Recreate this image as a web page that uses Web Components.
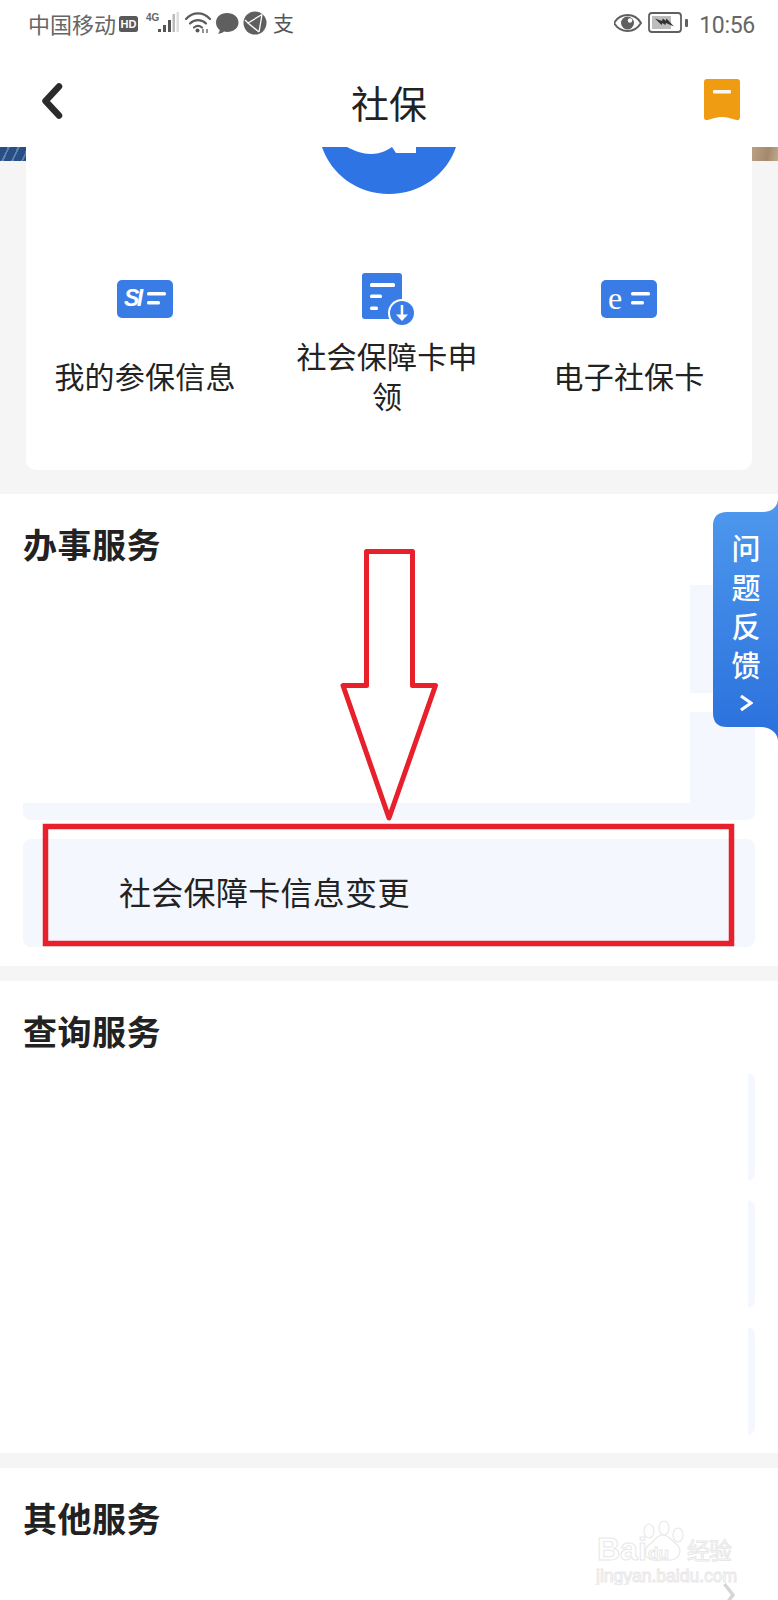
<!DOCTYPE html>
<html lang="zh-CN"><head><meta charset="utf-8"><title>社保</title>
<style>
html,body{margin:0;padding:0;background:#f5f5f5}
body{font-family:"Noto Sans CJK SC","Noto Sans",sans-serif;color:#222}
</style></head>
<body>
<social-page>
  <app-status></app-status>
  <app-nav>社保</app-nav>
  <hero-card>
    <service-tile icon="si">我的参保信息</service-tile>
    <service-tile icon="doc">社会保障卡申领</service-tile>
    <service-tile icon="e">电子社保卡</service-tile>
  </hero-card>
  <service-section heading="办事服务">
    <service-row style="--mw:667px;--mh:100%"></service-row>
    <service-row style="--mw:667px;--mh:91px"></service-row>
    <service-row style="--mw:0px;--mh:0px">社会保障卡信息变更</service-row>
  </service-section>
  <service-section heading="查询服务" class="q">
    <service-row style="--mw:725px;--mh:100%"></service-row>
    <service-row style="--mw:725px;--mh:100%"></service-row>
    <service-row style="--mw:725px;--mh:100%"></service-row>
  </service-section>
  <service-section heading="其他服务" class="last">
    <service-row chevron style="--mw:100%;--mh:100%"></service-row>
  </service-section>
  <feedback-tab></feedback-tab>
  <red-annotation></red-annotation>
  <baidu-mark></baidu-mark>
</social-page>
<script>
const tpl=(html)=>{const t=document.createElement('template');t.innerHTML=html;return t;};
class Base extends HTMLElement{
  connectedCallback(){ if(this.shadowRoot) return; const r=this.attachShadow({mode:'open'}); r.appendChild(this.constructor.t(this).content.cloneNode(true)); }
}
class SocialPage extends Base{ static t(){return tpl(`<style>:host{display:block;position:relative;width:778px;height:1600px;overflow:hidden;background:#f5f5f5}</style><slot></slot>`);} }
class AppStatus extends Base{ static t(){return tpl(`<style>
:host{display:flex;align-items:center;height:50px;background:#fff;color:#666;padding:0 23px 0 28px;box-sizing:border-box;font-size:22px}
.c{line-height:44px;padding-bottom:4px;width:91px;white-space:nowrap}
svg{display:block;flex:none}
.sp{flex:1}
.t{font:400 23px Roboto,sans-serif;letter-spacing:-.3px;margin-left:10px;color:#666}
</style>
<span class="c">中国移动</span>
<svg width="176" height="50" viewBox="119 0 176 50">
 <rect x="119" y="16" width="19" height="16" rx="2.5" fill="#595959"/>
 <text x="128.5" y="28" font-family="Liberation Sans" font-weight="700" font-size="11" fill="#fff" text-anchor="middle">HD</text>
 <text x="146" y="21" font-family="Liberation Sans" font-weight="700" font-size="10" fill="#666">4G</text>
 <g fill="#555"><rect x="158" y="29" width="3" height="3"/><rect x="163" y="25" width="3" height="7"/><rect x="168" y="20" width="3" height="12"/></g>
 <rect x="172.500" y="14" width="2.500" height="18" fill="#bbb"/><rect x="176.500" y="12" width="2.500" height="20" fill="#ddd"/>
 <g fill="none" stroke="#5c5c5c" stroke-width="2.200" stroke-linecap="round"><path d="M186 19c7-7.500 17-7.500 24 0"/><path d="M190 23.500c4.500-4.500 11.500-4.500 16 0"/><path d="M194 27.500c2.500-2 5.500-2 8 0"/></g>
 <circle cx="197.500" cy="30.500" r="2" fill="#555"/><path d="M203 29v4M207 29v4" stroke="#666" stroke-width="1.400"/>
 <path d="M227 13c6.500 0 11.500 4 11.500 9.500S233.500 32 227 32c-1 0-2-.1-3-.4-1.500 1.300-3.500 2.200-6 2.400 1-1.200 1.600-2.500 1.700-4-2.300-1.700-3.700-4.300-3.700-7.500C216 17 220.500 13 227 13z" fill="#5f5f5f"/>
 <circle cx="255" cy="23" r="11.500" fill="#5f5f5f"/><path d="M262 14.500 248 23l11 9M262 14.500 259 32M248 23l-3-3" fill="none" stroke="#fff" stroke-width="1.300"/>
 <text x="273" y="31" font-size="21" fill="#555" font-family="Noto Sans CJK SC">支</text>
</svg>
<span class="sp"></span>
<svg width="75" height="50" viewBox="615 0 75 50">
 <path d="M615 23c3-5 8-8 13.500-8s10.500 3 13.500 8c-3 5-8 8-13.500 8S618 28 615 23z" fill="none" stroke="#606060" stroke-width="2"/>
 <circle cx="628.500" cy="23" r="6.500" fill="#606060"/><circle cx="631" cy="20.500" r="2.200" fill="#fff"/>
 <rect x="650" y="13" width="32" height="19" rx="3" fill="none" stroke="#606060" stroke-width="1.800"/>
 <rect x="653" y="16" width="19" height="13" fill="#bdbdbd"/>
 <path d="M656 18.500l7 2.500.8-2.500 3 2.300.7-2.300 7.500 8-8-3.500-.7 2-3-2-.8 2z" fill="#333"/>
 <rect x="686" y="19" width="3" height="8" rx="1" fill="#606060"/>
</svg>
<span class="t">10:56</span>`);} }
class AppNav extends Base{ static t(){return tpl(`<style>
:host{display:grid;grid-template-columns:1fr auto 1fr;align-items:center;height:97px;background:#fff;padding:0 38px 0 41px;box-sizing:border-box;font-size:38px;color:#222}
svg{display:block}
.tt{line-height:52px;margin:6px 0 0 -3px}
.end{justify-self:end}
</style>
<svg width="22" height="36" viewBox="0 0 22 36" style="margin-top:5px"><path d="M18 3.500 4.500 18 18 32.500" fill="none" stroke="#2b2b2b" stroke-width="6.500" stroke-linecap="round" stroke-linejoin="round"/></svg>
<span class="tt"><slot></slot></span>
<svg class="end" width="36" height="42" viewBox="0 0 36 42" style="margin-top:3px"><path d="M3 0h30a3 3 0 0 1 3 3v35c0 2.500-1.500 3.600-3.500 3-5-1.500-9.500-3-14.500-3S8.500 39.500 3.500 41C1.500 41.600 0 40.500 0 38V3a3 3 0 0 1 3-3z" fill="#f09c12"/><rect x="9" y="11" width="18" height="3.500" rx="1" fill="#fff" opacity=".92"/></svg>`);} }
class HeroCard extends Base{ static t(){return tpl(`<style>
:host{display:grid;grid-template-columns:26px 726px 26px;height:332px;background:#f5f5f5;overflow:hidden}
.l{height:14px;background:repeating-linear-gradient(115deg,#274f86 0 7px,#5b7fae 7px 9px)}
.r{height:14px;background:linear-gradient(100deg,#b9a184,#a48a6c 60%,#c0a98e)}
.card{background:#fff;border-radius:0 0 10px 10px;height:323px;display:flex;flex-direction:column}
.blob{display:block;margin:0 auto;flex:none}
.tiles{display:grid;grid-template-columns:repeat(3,242px);margin-top:77px;margin-left:-2px}
</style>
<div class="l"></div>
<div class="card">
 <svg class="blob" width="136" height="48" viewBox="321 147 136 48"><path d="M322 147c9 27 35 47 67 47s58-20 67-47H416v6h-20l-4-6c-6 4-12 7-21 7-9 0-16-3-24-7z" fill="#2f74e4"/></svg>
 <div class="tiles"><slot></slot></div>
</div>
<div class="r"></div>`);} }
const icons={
si:`<svg width="56" height="38" viewBox="0 0 56 38"><rect width="56" height="38" rx="5" fill="#3a7ce6"/><text x="7" y="26" font-family="Liberation Sans" font-weight="700" font-style="italic" font-size="23" letter-spacing="-2.500" fill="#fff">SI</text><rect x="30" y="12" width="19" height="3.500" rx="1.500" fill="#fff"/><rect x="30" y="21" width="13" height="3.500" rx="1.500" fill="#fff"/></svg>`,
e:`<svg width="56" height="38" viewBox="0 0 56 38"><rect width="56" height="38" rx="5" fill="#3a7ce6"/><text x="7" y="28.500" font-family="Liberation Serif" font-size="32" fill="#fff">e</text><rect x="30" y="12" width="19" height="3.500" rx="1.500" fill="#fff"/><rect x="30" y="21" width="13" height="3.500" rx="1.500" fill="#fff"/></svg>`,
doc:`<svg width="54" height="54" viewBox="0 0 54 54"><rect x="0" y="0" width="40" height="46" rx="3" fill="#3a7ce6"/><rect x="8" y="10" width="25" height="4" rx="1.500" fill="#fff"/><rect x="8" y="21.500" width="12" height="3.500" rx="1.500" fill="#fff"/><rect x="8" y="33.500" width="8" height="3.500" rx="1.500" fill="#fff"/><circle cx="40" cy="40" r="14" fill="#fff"/><circle cx="40" cy="40" r="12" fill="#3a7ce6"/><path d="M40 32v13" stroke="#fff" stroke-width="2.500"/><path d="M34 41.500h12L40 48z" fill="#fff"/></svg>`};
class ServiceTile extends Base{ static t(el){return tpl(`<style>
:host{display:flex;flex-direction:column;align-items:center;width:242px}
.i{height:54px;display:flex;align-items:center;justify-content:center}
.i svg{display:block}
.doc{margin-left:4px;margin-top:2px;height:52px}
.lb{margin-top:7px;height:84px;display:flex;align-items:center;justify-content:center;box-sizing:border-box;padding:0 30px;text-align:center;font-size:30px;letter-spacing:.2px;line-height:40px;color:#222}
</style>
<div class="i ${el.getAttribute('icon')}">${icons[el.getAttribute('icon')]}</div>
<div class="lb"><span><slot></slot></span></div>`);} }
class ServiceSection extends Base{ static t(el){return tpl(`<style>
:host{display:block;background:#fff;padding:30px 23px 19px;margin-top:15px;box-sizing:border-box}
:host(.q){padding-bottom:18px}
:host(.last){height:132px;overflow:hidden}
h2{margin:0 0 21px;font:700 34px/40px "Noto Sans CJK SC",sans-serif;color:#222;letter-spacing:.5px}
:host(.q) h2{margin-bottom:22px}
.rows{display:flex;flex-direction:column;gap:19px}
</style>
<h2>${el.getAttribute('heading')}</h2>
<div class="rows"><slot></slot></div>`);} }
class ServiceRow extends Base{ static t(el){return tpl(`<style>
:host{display:flex;align-items:center;height:108px;box-sizing:border-box;padding:0 0 4px 96px;border-radius:8px;font-size:32px;letter-spacing:.3px;color:#222;
 background:linear-gradient(#fff,#fff) no-repeat left top / var(--mw,0) var(--mh,0), #f4f7fd}
svg{display:block;position:relative;left:604px;top:-16px}
</style><slot></slot>${el.hasAttribute('chevron')?`<svg width="12" height="26" viewBox="0 0 12 26"><path d="M1.500 2 10 13 1.500 24" fill="none" stroke="#d6d6d6" stroke-width="3.500"/></svg>`:''}`);} }
class FeedbackTab extends Base{ static t(){return tpl(`<style>
:host{position:absolute;left:713px;top:498px;width:65px;height:243px;color:#fff;font-size:29px;font-weight:500}
svg{position:absolute;inset:0;display:block}
.col{position:relative;display:flex;flex-direction:column;align-items:center;padding-top:30px;line-height:39px;width:66px}
.col span{height:39px}
.col svg{position:static;margin-top:10px}
</style>
<svg width="65" height="243" viewBox="0 0 65 243"><defs><linearGradient id="g" x1="0" y1="0" x2="0" y2="1"><stop offset="0" stop-color="#4f99ee"/><stop offset="1" stop-color="#2a70dc"/></linearGradient></defs>
<path d="M65 0C65 8 60 14 49 14H14Q0 14 0 28V215Q0 229 14 229H47C58 229 65 236 65 243Z" fill="url(#g)"/></svg>
<div class="col"><span>问</span><span>题</span><span>反</span><span>馈</span>
<svg width="14" height="18" viewBox="0 0 14 18"><path d="M2 2l10 7-10 7" fill="none" stroke="#fff" stroke-width="3.200" stroke-linejoin="miter"/></svg></div>`);} }
class RedAnnotation extends Base{ static t(){return tpl(`<style>:host{position:absolute;inset:0;pointer-events:none}svg{display:block}</style>
<svg width="778" height="1600" viewBox="0 0 778 1600" fill="none" stroke="#e8202c" stroke-linejoin="round">
<path d="M366.500 551.500H412.500V685.500H435.500L389 818 343 685.500H366.500Z" stroke-width="5"/>
<rect x="45.500" y="826.500" width="686" height="117" stroke-width="5.500" stroke-linejoin="miter"/>
</svg>`);} }
class BaiduMark extends Base{ static t(){return tpl(`<style>
:host{position:absolute;left:595px;top:1515px;width:142px;height:70px;color:#fff}
svg{display:block}
text{fill:#fff;stroke:#e8e8e8;stroke-width:1}
</style>
<svg width="142" height="70" viewBox="0 0 142 70">
<text x="2" y="45" font-family="Liberation Sans" font-weight="700" font-size="32">Bai</text>
<g fill="#fff" stroke="#e8e8e8" stroke-width="1.200"><ellipse cx="54" cy="16" rx="5" ry="7"/><ellipse cx="69" cy="13" rx="5" ry="7"/><ellipse cx="83" cy="20" rx="5" ry="7"/><path d="M68 20c6 0 8 5 12 8 5 3 6 8 4 12-3 6-9 5-15 5-7 0-14 2-18-4-2-5 0-9 4-12 5-3 6-9 13-9z"/></g>
<text x="53" y="44" font-family="Liberation Sans" font-weight="700" font-size="17">du</text>
<text x="92" y="44" font-family="Noto Sans CJK SC" font-size="23" letter-spacing="-1">经验</text>
<text x="1" y="67" font-family="Liberation Sans" font-size="17.500">jingyan.baidu.com</text>
</svg>`);} }
customElements.define('social-page',SocialPage);
customElements.define('app-status',AppStatus);
customElements.define('app-nav',AppNav);
customElements.define('hero-card',HeroCard);
customElements.define('service-tile',ServiceTile);
customElements.define('service-section',ServiceSection);
customElements.define('service-row',ServiceRow);
customElements.define('feedback-tab',FeedbackTab);
customElements.define('red-annotation',RedAnnotation);
customElements.define('baidu-mark',BaiduMark);
</script>
</body></html>
